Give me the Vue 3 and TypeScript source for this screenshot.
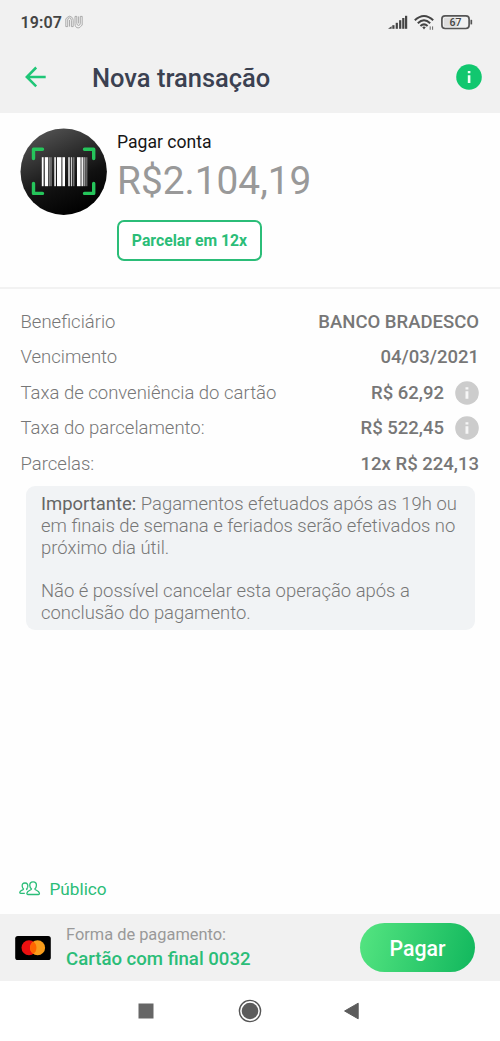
<script setup lang="ts">
interface Row { label: string; value: string; info?: boolean }
const rows: Row[] = [
  { label: 'Beneficiário', value: 'BANCO BRADESCO' },
  { label: 'Vencimento', value: '04/03/2021' },
  { label: 'Taxa de conveniência do cartão', value: 'R$ 62,92', info: true },
  { label: 'Taxa do parcelamento:', value: 'R$ 522,45', info: true },
  { label: 'Parcelas:', value: '12x R$ 224,13' },
]
// Barcode stripes: x offset, width, fill
const bars: [number, number, string][] = [
  [21.8, 1.8, '#fff'], [24.8, 3.4, '#fff'], [29.2, 1.4, '#999'], [31.2, .8, '#777'],
  [34.2, 1.8, '#ddd'], [37, 4.4, '#fff'], [42.4, 2.6, '#fff'], [48, 2.2, '#bbb'],
  [51, 1.2, '#ccc'], [53.2, 1.2, '#888'], [57, 3.6, '#fff'], [61.4, 2, '#eee'],
  [64.2, 1.2, '#bbb'], [66.3, 1, '#888'],
]
</script>

<template>
  <div class="screen">
    <header class="top">
      <div class="status">
        <span class="time">19:07</span>
        <svg class="nu" width="18" height="14" viewBox="0 0 18 14" fill="none" stroke="#999" stroke-width=".8">
          <path d="M.8 11.6V4L2.4 2.2Q4.6.2 6.8 2.2Q8.2 3.6 8.2 5.6V11.6H6.4V5.6Q6.4 2.8 4.5 2.8Q2.7 2.8 2.7 5V11.6Z" />
          <path d="M4.5 11.6V5M10 1.4V8.4Q10 12.9 13.2 12.9Q15 12.9 15.8 11.4L17.2 10V1.4H15.3V8.2Q15.3 10.4 13.6 10.4Q11.8 10.4 11.8 8.2V1.4H10M13.6 1.4V8.4" />
        </svg>
        <svg class="indicators" width="86" height="18" viewBox="0 0 86 18">
          <g fill="#444">
            <path d="M0 15.8L3.6 13.2V15.8Z" /><rect x="4.3" y="12.2" width="2.2" height="3.6" /><rect x="7.7" y="9.8" width="2.2" height="6" />
            <rect x="11.1" y="7.2" width="2.2" height="8.6" /><rect x="14.2" y="5" width="2.2" height="10.8" /><rect x="17" y="2.8" width="2.2" height="13" />
          </g>
          <g fill="none" stroke="#444" stroke-width="2">
            <path d="M26.8 7.2Q36-1.2 45.2 7.2M29.8 10.2Q36 4.4 42.2 10.2M32.4 12.9Q36 9.8 39.6 12.9" />
          </g>
          <path d="M34.2 14.1Q36 12.8 37.8 14.1L36 16.5Z" fill="#444" />
          <path d="M42.2 13.4V16.8M44.6 13.4V16.8" stroke="#666" />
          <rect x="53.9" y="2.9" width="27.2" height="12.6" rx="3.2" fill="#f1f1f1" stroke="#555" stroke-width="1.7" />
          <path d="M56 4.8H69V13.6H56Z" fill="#ddd" />
          <path d="M83.3 6.8V11.4" stroke="#555" stroke-width="1.7" />
          <text x="67.4" y="12.9" text-anchor="middle" class="pct">67</text>
        </svg>
      </div>
      <div class="titlebar">
        <svg width="22" height="22" viewBox="0 0 22 22" fill="none" stroke="#1fc677" stroke-width="2.5">
          <path d="M20.7 11H2.4M11.2 1.5L1.8 11L11.2 20.4" />
        </svg>
        <h1>Nova transação</h1>
        <svg class="help" width="26" height="26" viewBox="0 0 26 26">
          <circle cx="13" cy="13" r="12.8" fill="#11c76f" />
          <path d="M11.8 7H14.4V9.3H11.8ZM11.8 11.2H14.4V19H11.8Z" fill="#effff5" />
        </svg>
      </div>
    </header>

    <section class="summary">
      <svg class="avatar" width="88" height="88" viewBox="0 0 88 88">
        <defs>
          <linearGradient id="dark" x1=".2" y1="0" x2=".65" y2="1">
            <stop offset="0" stop-color="#555" /><stop offset=".65" stop-color="#111" /><stop offset="1" stop-color="#000" />
          </linearGradient>
        </defs>
        <circle cx="43.7" cy="43.7" r="43.2" fill="url(#dark)" />
        <path d="M13.5 30.5V21.3H22.5M64.5 21.3H73.7V30.5M73.7 55.5V65.4H64.5M22.5 65.4H13.5V55.5" fill="none" stroke="#25c55b" stroke-width="3.4" stroke-linecap="round" stroke-linejoin="round" />
        <rect v-for="(b, i) in bars" :key="i" :x="b[0]" y="29.2" :width="b[1]" height="29" :fill="b[2]" />
      </svg>
      <div class="bill">
        <span class="kind">Pagar conta</span>
        <strong class="amount">R$2.104,19</strong>
        <button class="split">Parcelar em 12x</button>
      </div>
    </section>

    <section class="details">
      <div v-for="row in rows" :key="row.label" class="row">
        <span class="label">{{ row.label }}</span>
        <span class="value">{{ row.value }}</span>
        <svg v-if="row.info" class="info" width="24" height="24" viewBox="0 0 24 24">
          <circle cx="12" cy="12" r="11.8" fill="#ccc" />
          <path d="M10.5 6.2H13.4V8.5H10.5ZM10.5 10.2H13.4V17.8H10.5Z" fill="#f6f6f6" />
        </svg>
      </div>
      <div class="notice">
        <p><b>Importante:</b> Pagamentos efetuados após as 19h ou<br>em finais de semana e feriados serão efetivados no<br>próximo dia útil.</p>
        <p>Não é possível cancelar esta operação após a<br>conclusão do pagamento.</p>
      </div>
    </section>

    <div class="privacy">
      <svg width="22" height="16" viewBox="0 0 22 16" fill="none" stroke="#2bbd78" stroke-width="1.3">
        <path d="M14.1.9C11.5.9 10.6 2.6 10.8 4.6C10.9 6.1 11.6 7.3 12.5 8C12.3 9.4 8.4 9.3 7.9 12.2Q7.8 13.5 9 13.5H19.4Q20.6 13.5 20.4 12.2C19.9 9.3 16 9.4 15.8 8C16.7 7.3 17.3 6.1 17.4 4.6C17.6 2.6 16.7.9 14.1.9Z" />
        <path d="M8.7 6.2C9.2 3.6 8.3 2 6 2C3.7 2 3 3.5 3.2 5.2C3.3 6.5 3.8 7.4 4.5 8C4.5 9.2 1.1 9.1 .8 11.3Q.7 12.3 1.7 12.3H5.8M8.7 6.2Q8.4 7.5 7.6 8L8 9.1" />
      </svg>
      <span>Público</span>
    </div>

    <footer class="payment">
      <svg class="card" width="36" height="24" viewBox="0 0 36 24">
        <rect x=".2" width="35.6" height="24" rx="2.6" fill="#000" />
        <circle cx="14" cy="11.7" r="7.5" fill="#eb1010" />
        <circle cx="22.6" cy="11.7" r="7.5" fill="#f99d1b" />
        <path d="M18.3 5.56A7.5 7.5 0 0 1 18.3 17.84A7.5 7.5 0 0 1 18.3 5.56Z" fill="#ff6500" />
      </svg>
      <div class="method">
        <span class="caption">Forma de pagamento:</span>
        <span class="choice">Cartão com final 0032</span>
      </div>
      <button class="pay">Pagar</button>
    </footer>

    <nav class="system">
      <svg width="16" height="16" viewBox="0 0 16 16"><rect x=".5" y=".5" width="15" height="15" fill="#666" /></svg>
      <svg width="24" height="24" viewBox="0 0 24 24">
        <circle cx="12" cy="12" r="10.6" fill="none" stroke="#555" stroke-width="1.4" /><circle cx="12" cy="12" r="8.3" fill="#5c5c5c" />
      </svg>
      <svg width="16" height="18" viewBox="0 0 16 18"><path d="M1.6 9L15.2 1.2V16.8Z" fill="#5c5c5c" stroke="#5c5c5c" stroke-linejoin="round" /></svg>
    </nav>
  </div>
</template>

<style>
body { margin: 0; background: #fff; }
</style>

<style scoped>
.screen { width: 500px; height: 1041px; display: flex; flex-direction: column; background: #fefefe; font-family: Roboto, "Liberation Sans", sans-serif; overflow: hidden; }
svg { display: block; flex: none; }
span, strong, h1, p { white-space: nowrap; }
button { font-family: inherit; padding: 0; box-sizing: border-box; }
.top { height: 113px; background: #f1f1f1; flex: none; }
.status { height: 44px; display: flex; align-items: center; padding: 0 26px 0 20.5px; }
.time { font-size: 16px; font-weight: 600; color: #444; letter-spacing: .1px; }
.nu { margin-left: 3px; }
.indicators { margin-left: auto; }
.pct { font: 500 10.5px Roboto, sans-serif; fill: #444; }
.titlebar { height: 66px; display: flex; align-items: center; padding: 0 18px 0 25px; }
h1 { margin: 1px 0 0 45px; font-size: 25.5px; font-weight: 500; color: #3b4151; }
.help { margin-left: auto; }
.summary { height: 174px; box-sizing: content-box; border-bottom: 2px solid #f2f2f2; display: flex; flex: none; padding-left: 20px; }
.avatar { margin-top: 15px; }
.bill { margin: 18px 0 0 9px; display: flex; flex-direction: column; align-items: flex-start; }
.kind { font-size: 17.6px; line-height: 22px; color: #161616; }
.amount { font-size: 38.8px; line-height: 48px; font-weight: 400; color: #999; margin-top: 4px; }
.split { width: 145px; height: 41px; margin-top: 14.6px; border: 2px solid #2bbd78; border-radius: 7px; background: #fff; color: #2bbd78; font-size: 15.75px; font-weight: 700; }
.details { padding: 15px 21px 0 20.5px; }
.row { height: 35.5px; display: flex; align-items: center; }
.label { font-size: 18.5px; font-weight: 300; color: #777; }
.value { margin-left: auto; font-size: 18.5px; font-weight: 500; color: #777; }
.info { margin-left: 11px; }
.notice { margin: 4.5px 4.5px 0 5px; height: 144px; box-sizing: border-box; padding: 8px 15.5px; border-radius: 9px; background: #f1f3f5; }
.notice p { margin: 0 0 22px; font-size: 18.45px; line-height: 21.8px; font-weight: 300; color: #777; }
.notice b { font-weight: 400; color: #666; }
.privacy { margin-top: auto; height: 51px; display: flex; align-items: center; padding-left: 19px; gap: 8.5px; color: #2bbd78; font-size: 17.2px; }
.payment { height: 67px; flex: none; background: #f1f1f1; display: flex; align-items: center; padding: 0 25px 0 15px; }
.method { margin-left: 15px; display: flex; flex-direction: column; padding-top: 1px; }
.caption { font-size: 16.4px; line-height: 22px; color: #999; }
.choice { font-size: 18.6px; line-height: 26px; font-weight: 500; color: #2bbd78; }
.pay { margin-left: auto; width: 115px; height: 49px; border: 0; border-radius: 25px; color: #fff; font-size: 21.3px; font-weight: 500; padding-top: 2px; background: linear-gradient(105deg, #55e581, #11b75d); }
.system { height: 60px; flex: none; display: flex; align-items: center; padding-left: 138px; background: #fff; }
.system svg + svg { margin-left: 84px; }
.system svg + svg + svg { margin-left: 81px; }
</style>
